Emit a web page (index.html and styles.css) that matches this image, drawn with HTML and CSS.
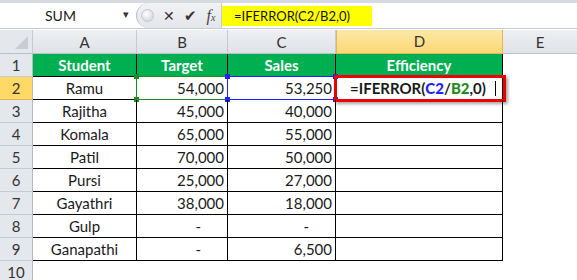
FILE: index.html
```html
<!DOCTYPE html>
<html lang="en">
<head>
  <meta charset="UTF-8">
  <title>IFERROR - Efficiency</title>
  <link rel="stylesheet" href="styles.css">
</head>
<body>
  <div class="fbar">
    <div class="namebox">
      <span class="box-label">SUM</span>
      <span class="drop">&#9662;</span>
    </div>
    <div class="tools">
      <span class="knob"></span>
      <span class="tool">&#10005;</span>
      <span class="tool check">&#10004;</span>
      <span class="tool fx">f<sub>x</sub></span>
    </div>
    <div class="input">
      <span class="hl">=IFERROR(C2/B2,0)</span>
    </div>
  </div>

  <div class="sheet">
    <div class="corner"><span class="tri"></span></div>
    <div class="colhead">A</div>
    <div class="colhead">B</div>
    <div class="colhead">C</div>
    <div class="colhead sel">D</div>
    <div class="colhead last">E</div>

    <div class="rowhead">1</div>
    <div class="cell head">Student</div>
    <div class="cell head">Target</div>
    <div class="cell head">Sales</div>
    <div class="cell head">Efficiency</div>
    <div class="cell blank"></div>

    <div class="rowhead sel">2</div>
    <div class="cell student">Ramu</div>
    <div class="cell num ref">54,000<span class="mark green"><i class="h tl"></i><i class="h tr"></i><i class="h bl"></i><i class="h br"></i></span></div>
    <div class="cell num ref">53,250<span class="mark blue"><i class="h tl"></i><i class="h tr"></i><i class="h bl"></i><i class="h br"></i></span></div>
    <div class="cell edit"><span class="f">=IFERROR(<b class="c-blue">C2</b>/<b class="c-green">B2</b>,0)</span><span class="caret"></span><span class="redbox"></span></div>
    <div class="cell blank"></div>

    <div class="rowhead">3</div>
    <div class="cell student">Rajitha</div>
    <div class="cell num">45,000</div>
    <div class="cell num">40,000</div>
    <div class="cell"></div>
    <div class="cell blank"></div>

    <div class="rowhead">4</div>
    <div class="cell student">Komala</div>
    <div class="cell num">65,000</div>
    <div class="cell num">55,000</div>
    <div class="cell"></div>
    <div class="cell blank"></div>

    <div class="rowhead">5</div>
    <div class="cell student">Patil</div>
    <div class="cell num">70,000</div>
    <div class="cell num">50,000</div>
    <div class="cell"></div>
    <div class="cell blank"></div>

    <div class="rowhead">6</div>
    <div class="cell student">Pursi</div>
    <div class="cell num">25,000</div>
    <div class="cell num">27,000</div>
    <div class="cell"></div>
    <div class="cell blank"></div>

    <div class="rowhead">7</div>
    <div class="cell student">Gayathri</div>
    <div class="cell num">38,000</div>
    <div class="cell num">18,000</div>
    <div class="cell"></div>
    <div class="cell blank"></div>

    <div class="rowhead">8</div>
    <div class="cell student">Gulp</div>
    <div class="cell num dash">-</div>
    <div class="cell num dash">-</div>
    <div class="cell"></div>
    <div class="cell blank"></div>

    <div class="rowhead">9</div>
    <div class="cell student">Ganapathi</div>
    <div class="cell num dash">-</div>
    <div class="cell num">6,500</div>
    <div class="cell"></div>
    <div class="cell blank"></div>

    <div class="rowhead">10</div>
    <div class="cell blank"></div>
    <div class="cell blank"></div>
    <div class="cell blank"></div>
    <div class="cell blank"></div>
    <div class="cell blank"></div>
  </div>
</body>
</html>
```

FILE: styles.css
```css
:root {
  --green: #00b050;
  --grid: #000;
  --head-bg: #e4e7eb;
  --head-line: #c5cbd3;
  --text: #1a1a1a;
}

body {
  margin: 0;
  width: 577px;
  height: 280px;
  overflow: hidden;
  background: #fff;
  font-family: Lato, "Open Sans", sans-serif;
  color: var(--text);
}

/* Formula bar */
.fbar {
  display: flex;
  height: 25px;
  border-top: 3px solid #d5dae0;
  border-bottom: 1px solid #c6ccd4;
  background: #fff;
}

.namebox {
  width: 136px;
  display: flex;
  align-items: center;
  position: relative;
  font-size: 14px;
}

.box-label {
  margin-left: 45px;
}

.drop {
  position: absolute;
  right: 7px;
  top: 4px;
  font-size: 11px;
  color: #333;
}

.tools {
  width: 85px;
  display: flex;
  align-items: center;
  gap: 9px;
  background: linear-gradient(#f1f2f4, #e3e6ea);
  border-left: 1px solid #b9bfc7;
  border-radius: 13px 0 0 13px;
  padding-left: 4px;
  box-sizing: border-box;
}

.knob {
  width: 11px;
  height: 11px;
  border-radius: 50%;
  background: radial-gradient(circle at 40% 35%, #fff, #c7ccd3);
  border: 1px solid #c3c8cf;
}

.tool {
  font-size: 14px;
  color: #333;
  width: 12px;
  text-align: center;
}

.check {
  font-size: 15px;
}

.fx {
  font-family: "Liberation Serif", serif;
  font-style: italic;
  font-size: 16px;
  color: #444;
}

.fx sub {
  font-size: 10px;
  vertical-align: baseline;
}

.input {
  flex: 1;
  display: flex;
  align-items: center;
  border-left: 1px solid #c6ccd4;
}

.hl {
  background: #ffff00;
  height: 20px;
  line-height: 20px;
  padding: 0 22px 0 12px;
  font-size: 13px;
  color: #111;
}

/* Sheet grid */
.sheet {
  display: grid;
  grid-template-columns: 33px 104px 91px 108px 167px 1fr;
  grid-template-rows: 24px repeat(10, 23px);
  margin-top: 1px;
}

.corner {
  background: var(--head-bg);
  border-right: 1px solid var(--head-line);
  border-bottom: 1px solid #b9c0c9;
  position: relative;
}

.tri {
  position: absolute;
  right: 4px;
  bottom: 4px;
  width: 0;
  height: 0;
  border-left: 13px solid transparent;
  border-bottom: 13px solid #c9cdd3;
}

.colhead {
  background: linear-gradient(#eef0f2, #dfe2e7);
  border-right: 1px solid var(--head-line);
  border-bottom: 1px solid #b9c0c9;
  text-align: center;
  font-size: 15px;
  line-height: 24px;
  color: #333;
}

.colhead.sel {
  background: linear-gradient(#fbe8a8, #fdd873);
  border: 1px solid #e2b55c;
  border-top: none;
  line-height: 23px;
}

.colhead.last {
  border-right: none;
}

.rowhead {
  background: var(--head-bg);
  border-right: 1px solid #b3bac3;
  border-bottom: 1px solid var(--head-line);
  text-align: center;
  font-size: 15px;
  line-height: 23px;
  color: #333;
}

.rowhead.sel {
  background: #ffd966;
  border-bottom-color: #e2b55c;
}

.cell {
  border-right: 1px solid var(--grid);
  border-bottom: 1px solid var(--grid);
  font-size: 15px;
  line-height: 23px;
  position: relative;
}

.cell.blank {
  border: none;
}

.cell.head {
  background: var(--green);
  color: #fff;
  font-weight: bold;
  text-align: center;
}

.cell.student {
  text-align: center;
}

.cell.num {
  text-align: right;
  padding-right: 3px;
}

.cell.num.dash {
  padding-right: 26px;
}

/* Formula references */
.mark {
  position: absolute;
  left: -1px;
  top: -1px;
  right: -1px;
  bottom: -1px;
  border: 1px solid;
}

.mark.green {
  border-color: #1e8b1e;
}

.mark.blue {
  border-color: #1f1fff;
}

.h {
  position: absolute;
  width: 5px;
  height: 5px;
  background: currentColor;
}

.mark.green .h { color: #1e8b1e; }
.mark.blue .h { color: #1f1fff; }

.tl { left: -3px; top: -3px; }
.tr { right: -3px; top: -3px; }
.bl { left: -3px; bottom: -3px; }
.br { right: -3px; bottom: -3px; }

/* Editing cell */
.cell.edit {
  font-weight: bold;
  padding-left: 14px;
}

.c-blue { color: #1f1fff; }
.c-green { color: #1e8b1e; }

.caret {
  display: inline-block;
  width: 1px;
  height: 15px;
  background: #000;
  margin-left: 9px;
  vertical-align: -2px;
}

.redbox {
  position: absolute;
  left: -2px;
  top: -2px;
  right: -4px;
  bottom: -3px;
  border: 3px solid #ee0000;
  box-shadow: 2px 2px 3px rgba(0, 0, 0, 0.35);
}
```
